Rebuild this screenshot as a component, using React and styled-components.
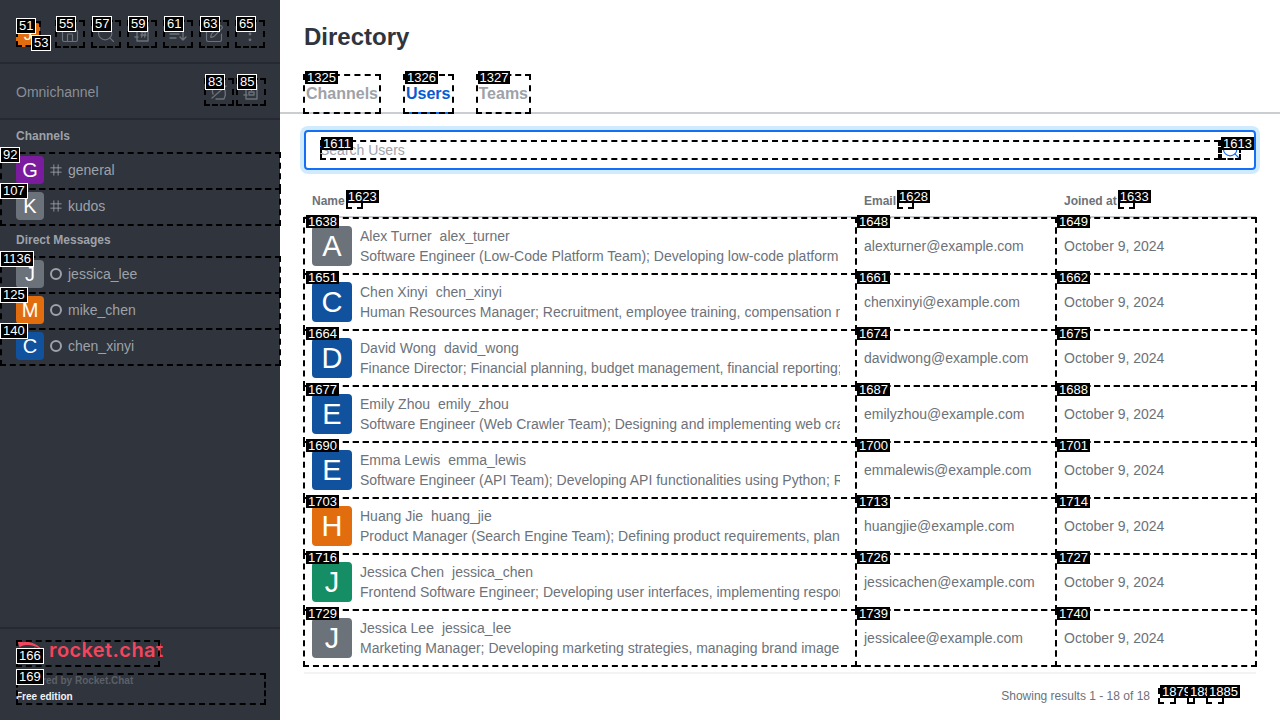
import styled, { createGlobalStyle, css } from "styled-components";
import { House, Search, SquarePen, EllipsisVertical, ChevronDown } from "lucide-react";

const GlobalStyle = createGlobalStyle`
  * { box-sizing: border-box; }
  html, body { margin: 0; padding: 0; }
  body { font-family: "Liberation Sans", Arial, sans-serif; background: #fff; }
`;

// dashed annotation box that sits over an element
const marked = css`
  position: relative;
  &::after {
    content: "";
    position: absolute;
    inset: var(--mark-inset, 0);
    border: 2px dashed #000;
    pointer-events: none;
  }
`;

const Tag = styled.span`
  position: absolute;
  z-index: 2;
  left: ${(p) => p.$x ?? 2}px;
  top: ${(p) => p.$y ?? -3}px;
  padding: 0 2px;
  background: #000;
  color: #fff;
  font: 13px/13px "Liberation Sans", Arial, sans-serif;
  white-space: nowrap;
  ${(p) =>
    p.$framed &&
    css`
      border: 1px solid #fff;
      line-height: 14px;
    `}
`;

const Page = styled.div`
  display: flex;
  width: 1280px;
  height: 720px;
  overflow: hidden;
`;

const Sidebar = styled.aside`
  display: flex;
  flex-direction: column;
  flex: 0 0 280px;
  width: 280px;
  min-width: 0;
  background: #2f343d;
  color: #9ea2a8;
`;

const TopBar = styled.div`
  display: flex;
  align-items: center;
  height: 64px;
  padding: 6px 14px 0 16px;
  border-bottom: 2px solid #262931;
`;

const UserBadge = styled.div`
  ${marked}
  flex: none;
  width: 25px;
  height: 26px;
  margin-right: 8px;
`;

const UserShape = styled.div`
  position: absolute;
  left: 0;
  top: 2px;
`;

const IconButton = styled.div`
  ${marked}
  display: flex;
  align-items: center;
  justify-content: center;
  flex: none;
  width: 30px;
  height: 28px;
  margin-left: ${(p) => p.$gap ?? 6}px;
  color: #6c727a;
`;

const OmniBar = styled.div`
  display: flex;
  align-items: center;
  height: 56px;
  padding: 2px 14px 0 16px;
  border-bottom: 2px solid #262931;
  font-size: 14px;
  color: #8b8f96;
`;

const OmniTitle = styled.span`
  flex: 1;
`;

const SectionTitle = styled.div`
  display: flex;
  align-items: center;
  height: 32px;
  padding-left: 16px;
  font-size: 12px;
  font-weight: 700;
  color: #9ea2a8;
`;

const RoomRow = styled.div`
  ${marked}
  --mark-inset: 0 0 -2px;
  display: flex;
  align-items: center;
  width: 281px;
  height: 36px;
  padding-left: 16px;
  font-size: 14px;
  color: #9ea2a8;
`;

const Avatar = styled.div`
  display: flex;
  align-items: center;
  justify-content: center;
  flex: none;
  width: ${(p) => p.$size}px;
  height: ${(p) => p.$size}px;
  border-radius: 4px;
  background: ${(p) => p.$color};
  color: #fff;
  font-size: ${(p) => Math.round(p.$size * 0.72)}px;
`;

const RoomIcon = styled.span`
  display: flex;
  align-items: center;
  justify-content: center;
  flex: none;
  width: 12px;
  height: 12px;
  margin: 0 6px;
`;

const StatusRing = styled.span`
  width: 12px;
  height: 12px;
  border: 2px solid #9ea2a8;
  border-radius: 50%;
`;

const SideFooter = styled.div`
  margin-top: auto;
  height: 93px;
  padding: 11px 0 0 16px;
  border-top: 2px solid #262931;
`;

const LogoBox = styled.div`
  ${marked}
  display: flex;
  width: 144px;
  height: 27px;
`;

const LogoMark = styled.svg`
  flex: none;
`;

const LogoText = styled.span`
  margin-left: 7px;
  font: 600 20px/20px Inter, sans-serif;
  letter-spacing: 0.4px;
  white-space: nowrap;
  color: #f5455c;
`;

const EditionBox = styled.div`
  ${marked}
  width: 250px;
  height: 32px;
  margin-top: 9px;
  font-size: 10px;
  font-weight: 700;
  line-height: 16px;
`;

const Powered = styled.div`
  margin-top: -3px;
  color: #5b6068;
`;

const Edition = styled.div`
  color: #f2f3f5;
`;

const Main = styled.main`
  flex: 1;
  min-width: 0;
  background: #fff;
`;

const Title = styled.h1`
  display: flex;
  align-items: center;
  height: 74px;
  margin: 0;
  padding: 0 24px;
  font-size: 24px;
  font-weight: 700;
  color: #2f343d;
`;

const Tabs = styled.nav`
  display: flex;
  gap: 22px;
  height: 40px;
  padding-left: 23px;
  box-shadow: inset 0 -2px 0 #cbced1;
`;

const TabItem = styled.div`
  ${marked}
  display: flex;
  align-items: center;
  height: 40px;
  padding: 0 3px;
  font-size: 16px;
  font-weight: 700;
  color: ${(p) => (p.$active ? "#095ad2" : "#9ea2a8")};
  box-shadow: ${(p) => (p.$active ? "inset 0 -2px 0 #156ff5" : "none")};
`;

const SearchBar = styled.div`
  display: flex;
  align-items: center;
  height: 40px;
  margin: 16px 24px 0;
  padding: 0 13px 0 14px;
  border: 2px solid #156ff5;
  border-radius: 4px;
  box-shadow: 0 0 0 4px #d1ebfe;
`;

const InputBox = styled.div`
  ${marked}
  flex: 1;
  height: 20px;
  &::before {
    content: "";
    position: absolute;
    left: 0;
    top: 2px;
    bottom: 2px;
    width: 1px;
    background: #156ff5;
  }
`;

const SearchInput = styled.input`
  display: block;
  width: 100%;
  height: 20px;
  padding: 0;
  border: 0;
  outline: 0;
  background: none;
  font: 14px/20px "Liberation Sans", Arial, sans-serif;
  &::placeholder {
    color: #9ea2a8;
    opacity: 1;
  }
`;

const SearchIconBox = styled.div`
  ${marked}
  display: flex;
  align-items: center;
  justify-content: center;
  width: 21px;
  height: 20px;
  color: #156ff5;
`;

const Table = styled.div`
  margin: 16px 24px 0;
`;

const HeadRow = styled.div`
  display: grid;
  grid-template-columns: 552px 200px 200px;
  height: 32px;
  border-bottom: 2px solid #cbced1;
`;

const HeadCell = styled.div`
  display: flex;
  align-items: center;
  gap: 1px;
  padding: 0 0 0 8px;
  font-size: 12px;
  font-weight: 700;
  color: #6c727a;
`;

const SortBox = styled.span`
  ${marked}
  display: flex;
  width: 17px;
  height: 16px;
  color: #cbced1;
`;

const BodyRow = styled.div`
  display: grid;
  grid-template-columns: 552px 200px 200px;
  height: 56px;
`;

const NameCell = styled.div`
  ${marked}
  --mark-inset: -1px;
  display: flex;
  align-items: center;
  gap: 8px;
  padding: 0 16px 0 8px;
  min-width: 0;
`;

const TextCell = styled.div`
  ${marked}
  --mark-inset: -1px;
  display: flex;
  align-items: center;
  padding-left: 8px;
  font-size: 14px;
  color: #6c727a;
`;

const Info = styled.div`
  flex: 1;
  min-width: 0;
  overflow: hidden;
  white-space: nowrap;
  font-size: 14px;
  line-height: 20px;
  color: #6c727a;
`;

const NameLine = styled.div`
  display: flex;
  gap: 8px;
`;

const TableEnd = styled.div`
  height: 2px;
  margin: 6px 24px 0;
  background: #f2f3f5;
`;

const Pager = styled.div`
  display: flex;
  align-items: center;
  justify-content: flex-end;
  height: 16px;
  margin-top: 14px;
  padding-right: 56px;
  font-size: 12px;
  color: #6c727a;
`;

const PagerText = styled.span`
  margin-right: 8px;
`;

const PageButton = styled.span`
  ${marked}
  display: block;
  width: ${(p) => p.$w}px;
  height: 16px;
  margin-left: ${(p) => p.$gap}px;
`;

const Glyph = ({ children, size = 20 }) => (
  <svg width={size} height={size} viewBox="0 0 20 20" fill="none" stroke="currentColor" strokeWidth="1.4" strokeLinecap="round" strokeLinejoin="round">
    {children}
  </svg>
);

const HashIcon = () => (
  <svg width="14" height="14" viewBox="0 0 14 14" fill="none" stroke="#9ea2a8" strokeWidth="1">
    <path d="M4.500 0.500v13M9.500 0.500v13M0.500 4.500h13M0.500 9.500h13" />
  </svg>
);

const Rocket = () => (
  <LogoMark width="26" height="27" viewBox="0 0 26 27">
    <path d="M0 0c3 .4 5.400 1.200 7 2.300 7-1 14 1.200 19 7.700-5-3.500-10.500-5.200-15.500-5C7.500 5 5 6 3.500 7.500 3 4.500 2 2 0 0z" fill="#f5455c" />
    <path d="M18 7c4 1.500 6.500 4 8 7v6h-3c0-4-2-9-5-13z" fill="#f5455c" />
  </LogoMark>
);

const rooms = [
  { id: 92, letter: "G", color: "#7b1b9e", name: "general" },
  { id: 107, letter: "K", color: "#6c727a", name: "kudos" },
];

const directs = [
  { id: 1136, letter: "J", color: "#6c727a", name: "jessica_lee" },
  { id: 125, letter: "M", color: "#e26d0e", name: "mike_chen" },
  { id: 140, letter: "C", color: "#10529e", name: "chen_xinyi" },
];

const toolbar = [
  { id: 55, icon: <House size={20} strokeWidth={1.4} /> },
  { id: 57, icon: <Search size={20} strokeWidth={1.4} /> },
  {
    id: 59,
    icon: (
      <Glyph>
        <path d="M5 3h11v14H5zM3 7h3M3 13h3M9 8h5M9 11h5M10.500 6l-.8 7M13.500 6l-.8 7" />
      </Glyph>
    ),
  },
  {
    id: 61,
    icon: (
      <Glyph>
        <path d="M2 6h9M2 10h9M2 14h6M15 4v12M12 13l3 3 3-3" />
      </Glyph>
    ),
  },
  { id: 63, icon: <SquarePen size={20} strokeWidth={1.4} /> },
  { id: 65, icon: <EllipsisVertical size={20} strokeWidth={1.4} /> },
];

const users = [
  { ids: [1638, 1648, 1649], letter: "A", color: "#6c727a", name: "Alex Turner", login: "alex_turner", bio: "Software Engineer (Low-Code Platform Team); Developing low-code platform features and tools", email: "alexturner@example.com" },
  { ids: [1651, 1661, 1662], letter: "C", color: "#10529e", name: "Chen Xinyi", login: "chen_xinyi", bio: "Human Resources Manager; Recruitment, employee training, compensation management and more", email: "chenxinyi@example.com" },
  { ids: [1664, 1674, 1675], letter: "D", color: "#10529e", name: "David Wong", login: "david_wong", bio: "Finance Director; Financial planning, budget management, financial reporting; Cost control", email: "davidwong@example.com" },
  { ids: [1677, 1687, 1688], letter: "E", color: "#10529e", name: "Emily Zhou", login: "emily_zhou", bio: "Software Engineer (Web Crawler Team); Designing and implementing web crawler systems", email: "emilyzhou@example.com" },
  { ids: [1690, 1700, 1701], letter: "E", color: "#10529e", name: "Emma Lewis", login: "emma_lewis", bio: "Software Engineer (API Team); Developing API functionalities using Python; RESTful services", email: "emmalewis@example.com" },
  { ids: [1703, 1713, 1714], letter: "H", color: "#e26d0e", name: "Huang Jie", login: "huang_jie", bio: "Product Manager (Search Engine Team); Defining product requirements, planning roadmaps", email: "huangjie@example.com" },
  { ids: [1716, 1726, 1727], letter: "J", color: "#158d65", name: "Jessica Chen", login: "jessica_chen", bio: "Frontend Software Engineer; Developing user interfaces, implementing responsive layouts", email: "jessicachen@example.com" },
  { ids: [1729, 1739, 1740], letter: "J", color: "#6c727a", name: "Jessica Lee", login: "jessica_lee", bio: "Marketing Manager; Developing marketing strategies, managing brand image and campaigns", email: "jessicalee@example.com" },
];

const columns = [
  { label: "Name", tag: 1623 },
  { label: "Email", tag: 1628 },
  { label: "Joined at", tag: 1633 },
];

const App = () => {
  return (
    <Page>
      <GlobalStyle />
      <Sidebar>
        <TopBar>
          <UserBadge>
            <UserShape>
              <Avatar $size={24} $color="#e26d0e">J</Avatar>
            </UserShape>
            <Tag $framed $x={0} $y={-3}>51</Tag>
            <Tag $framed $x={15} $y={14}>53</Tag>
          </UserBadge>
          {toolbar.map((item) => (
            <IconButton key={item.id}>
              {item.icon}
              <Tag $framed $x={1} $y={-4}>{item.id}</Tag>
            </IconButton>
          ))}
        </TopBar>
        <OmniBar>
          <OmniTitle>Omnichannel</OmniTitle>
          <IconButton $gap={0}>
            <Glyph>
              <path d="M3 16L17 4M4 12c-2-5 2-9 6-9M16 8c1 4 0 7-1 9H7" />
            </Glyph>
            <Tag $framed $x={1} $y={-4}>83</Tag>
          </IconButton>
          <IconButton $gap={2}>
            <Glyph>
              <path d="M5 3h11v14H5zM3 7h3M3 13h3M8 13h5v-3H8zM10.500 6.500v2" />
            </Glyph>
            <Tag $framed $x={1} $y={-4}>85</Tag>
          </IconButton>
        </OmniBar>
        <SectionTitle>Channels</SectionTitle>
        {rooms.map((room) => (
          <RoomRow key={room.id}>
            <Avatar $size={28} $color={room.color}>{room.letter}</Avatar>
            <RoomIcon><HashIcon /></RoomIcon>
            {room.name}
            <Tag $framed $x={0} $y={-5}>{room.id}</Tag>
          </RoomRow>
        ))}
        <SectionTitle>Direct Messages</SectionTitle>
        {directs.map((room) => (
          <RoomRow key={room.id}>
            <Avatar $size={28} $color={room.color}>{room.letter}</Avatar>
            <RoomIcon><StatusRing /></RoomIcon>
            {room.name}
            <Tag $framed $x={0} $y={-5}>{room.id}</Tag>
          </RoomRow>
        ))}
        <SideFooter>
          <LogoBox>
            <Rocket />
            <LogoText>rocket.chat</LogoText>
            <Tag $framed $x={0} $y={8}>166</Tag>
          </LogoBox>
          <EditionBox>
            <Powered>Powered by Rocket.Chat</Powered>
            <Edition>Free edition</Edition>
            <Tag $framed $x={0} $y={-4}>169</Tag>
          </EditionBox>
        </SideFooter>
      </Sidebar>
      <Main>
        <Title>Directory</Title>
        <Tabs>
          <TabItem>Channels<Tag>1325</Tag></TabItem>
          <TabItem $active>Users<Tag>1326</Tag></TabItem>
          <TabItem>Teams<Tag>1327</Tag></TabItem>
        </Tabs>
        <SearchBar>
          <InputBox>
            <SearchInput placeholder="Search Users" readOnly />
            <Tag $x={1} $y={-3}>1611</Tag>
          </InputBox>
          <SearchIconBox>
            <Search size={20} strokeWidth={1.4} />
            <Tag $x={1} $y={-3}>1613</Tag>
          </SearchIconBox>
        </SearchBar>
        <Table>
          <HeadRow>
            {columns.map((col) => (
              <HeadCell key={col.tag}>
                {col.label}
                <SortBox>
                  <ChevronDown size={16} />
                  <Tag $x={0} $y={-3}>{col.tag}</Tag>
                </SortBox>
              </HeadCell>
            ))}
          </HeadRow>
          {users.map((user) => (
            <BodyRow key={user.ids[0]}>
              <NameCell>
                <Avatar $size={40} $color={user.color}>{user.letter}</Avatar>
                <Info>
                  <NameLine>
                    <span>{user.name}</span>
                    <span>{user.login}</span>
                  </NameLine>
                  <div>{user.bio}</div>
                </Info>
                <Tag>{user.ids[0]}</Tag>
              </NameCell>
              <TextCell>
                {user.email}
                <Tag $x={1}>{user.ids[1]}</Tag>
              </TextCell>
              <TextCell>
                October 9, 2024
                <Tag $x={1}>{user.ids[2]}</Tag>
              </TextCell>
            </BodyRow>
          ))}
        </Table>
        <TableEnd />
        <Pager>
          <PagerText>Showing results 1 - 18 of 18</PagerText>
          <PageButton $w={18} $gap={0}><Tag>1879</Tag></PageButton>
          <PageButton $w={8} $gap={11}><Tag $x={1}>1882</Tag></PageButton>
          <PageButton $w={18} $gap={11}><Tag $x={1}>1885</Tag></PageButton>
        </Pager>
      </Main>
    </Page>
  );
};

export default App;
